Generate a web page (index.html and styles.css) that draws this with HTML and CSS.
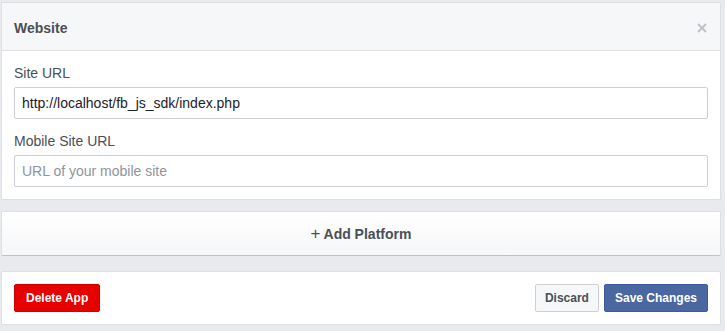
FILE: index.html
```html
<!DOCTYPE html>
<html>
<head>
    <title>Website</title>
    <link rel="stylesheet" href="styles.css">
</head>
<body>

    <div class="panel">
        <div class="panel-header">
            <span class="panel-title">Website</span>
            <svg class="close" width="10" height="10" viewBox="0 0 10 10">
                <path d="M1 1 L9 9 M9 1 L1 9" stroke="#bec2c9" stroke-width="2"/>
            </svg>
        </div>
        <div class="panel-body">
            <label class="field-label">Site URL</label>
            <input class="field" type="text" value="http://localhost/fb_js_sdk/index.php">
            <label class="field-label second">Mobile Site URL</label>
            <input class="field" type="text" placeholder="URL of your mobile site">
        </div>
    </div>

    <div class="add-platform">
        <span class="plus">+</span> Add Platform
    </div>

    <div class="actions">
        <button class="button delete">Delete App</button>
        <div class="right-buttons">
            <button class="button discard">Discard</button>
            <button class="button save">Save Changes</button>
        </div>
    </div>

</body>
</html>
```

FILE: styles.css
```css
body {
    font-family: "Liberation Sans", Arial, sans-serif;
    background-color: #e9eaed;
    margin: 0;
    padding: 2px 4px 0 1px;
}
.panel {
    background-color: #fff;
    border: 1px solid #dddfe2;
    border-radius: 2px;
}
.panel-header {
    display: flex;
    justify-content: space-between;
    align-items: center;
    height: 47px;
    padding: 0 12px;
    background-color: #f6f7f9;
    border-bottom: 1px solid #dddfe2;
}
.panel-title {
    font-size: 14px;
    font-weight: bold;
    color: #4b4f56;
    padding-top: 2px;
}
.close {
    margin-right: 1px;
    margin-top: 2px;
}
.panel-body {
    display: flex;
    flex-direction: column;
    padding: 13px 12px 12px 12px;
}
.field-label {
    font-size: 14px;
    line-height: 18px;
    color: #4b4f56;
    margin-bottom: 5px;
}
.field-label.second {
    margin-top: 13px;
}
.field {
    height: 32px;
    box-sizing: border-box;
    border: 1px solid #ccd0d5;
    border-radius: 2px;
    padding: 0 7px;
    font-family: "Liberation Sans", Arial, sans-serif;
    font-size: 14px;
    color: #1d2129;
    outline: none;
}
.field::placeholder {
    color: #90949c;
}
.add-platform {
    margin-top: 11px;
    height: 43px;
    display: flex;
    justify-content: center;
    align-items: center;
    background: linear-gradient(#fff, #f6f7f9);
    border: 1px solid #dddfe2;
    border-bottom-color: #bec2c9;
    border-radius: 2px;
    font-size: 14px;
    font-weight: bold;
    color: #4b4f56;
}
.plus {
    font-size: 17px;
    font-weight: normal;
    line-height: 14px;
    margin-right: 3px;
    margin-top: 1px;
}
.actions {
    margin-top: 15px;
    display: flex;
    justify-content: space-between;
    align-items: center;
    padding: 12px;
    background-color: #fff;
    border: 1px solid #dddfe2;
    border-radius: 2px;
}
.right-buttons {
    display: flex;
    gap: 5px;
}
.button {
    height: 28px;
    padding: 0 11px;
    font-family: "Liberation Sans", Arial, sans-serif;
    font-size: 12px;
    font-weight: bold;
    border-radius: 2px;
    cursor: pointer;
}
.delete {
    background-color: #e60000;
    border: 1px solid #d00000;
    color: #fff;
}
.discard {
    padding: 0 9px;
    background-color: #f6f7f9;
    border: 1px solid #ced0d4;
    color: #4b4f56;
}
.save {
    padding: 0 10px;
    background-color: #4b67a1;
    border: 1px solid #3b5b9e;
    color: #fff;
}
```
